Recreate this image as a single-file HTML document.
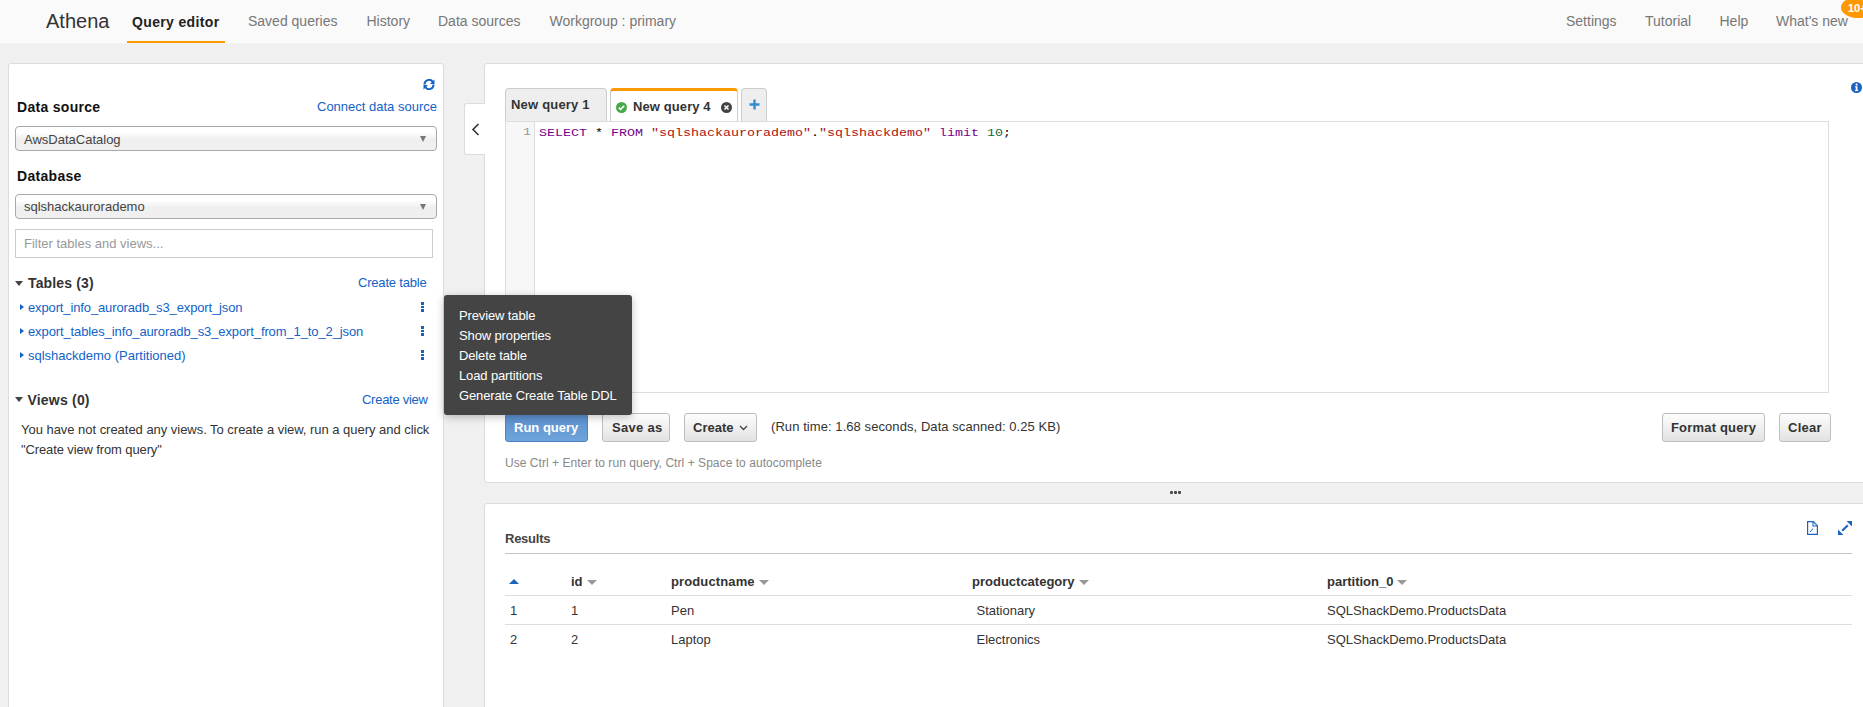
<!DOCTYPE html>
<html><head><meta charset="utf-8"><title>Athena</title>
<style>
*{box-sizing:border-box;margin:0;padding:0}
html,body{width:1863px;height:707px;overflow:hidden;background:#f0f0f0;font-family:"Liberation Sans",sans-serif;color:#333}
.t{position:absolute;white-space:nowrap;line-height:1}
.a{position:absolute}
.s14{font-size:14px}.s13{font-size:13px}.s12{font-size:12px}
.b{font-weight:bold}
.blue{color:#1262c8}
#hdr{position:absolute;left:0;top:0;width:1863px;height:43px;background:#fafafa}
.nav{color:#777}
.panel{position:absolute;background:#fff;border:1px solid #dcdcdc;border-radius:3px}
.sel{position:absolute;border:1px solid #a8a8a8;border-radius:4px;background:linear-gradient(#fff 0%,#fff 22%,#efefef 55%,#f0f0f0 100%)}
.btn{position:absolute;border:1px solid #bdbdbd;border-radius:3px;background:linear-gradient(#fdfdfd,#e2e2e2)}
.tri-d{position:absolute;width:0;height:0;border-left:4px solid transparent;border-right:4px solid transparent;border-top:5px solid #444}
.tri-r{position:absolute;width:0;height:0;border-top:3.5px solid transparent;border-bottom:3.5px solid transparent;border-left:4.5px solid #1262c8}
.keb{position:absolute;width:3px;height:10px}
.keb i{position:absolute;left:0;width:3px;height:2.8px;background:#1262c4}
.menu{position:absolute;left:444px;top:295px;width:188px;height:120px;background:#444;border-radius:3px;box-shadow:0 2px 8px rgba(0,0,0,.25)}
.mi{color:#fff;letter-spacing:-0.13px}
.cm{font-family:"Liberation Mono",monospace;font-size:13.33px;transform:scaleY(0.84);transform-origin:0 11.3px}
.kw{color:#708}.str{color:#a11}.num{color:#164}
.tab{position:absolute;top:88px;height:33px;border:1px solid #ccc;border-bottom:none;border-radius:4px 4px 0 0;background:#eee}
.thtri{position:absolute;width:0;height:0;border-left:5px solid transparent;border-right:5px solid transparent;border-top:5px solid #999}
</style></head><body>

<!-- HEADER -->
<div id="hdr"></div>
<div class="t" style="left:46px;top:10.5px;font-size:20px;color:#333">Athena</div>
<div class="t s14 b" style="left:132px;top:14.5px;color:#222;letter-spacing:0.35px">Query editor</div>
<div class="a" style="left:127px;top:41px;width:98px;height:2px;background:#f90"></div>
<div class="t s14 nav" style="left:248px;top:14px">Saved queries</div>
<div class="t s14 nav" style="left:366.5px;top:14px">History</div>
<div class="t s14 nav" style="left:438px;top:14px">Data sources</div>
<div class="t s14 nav" style="left:549.5px;top:14px">Workgroup : primary</div>
<div class="t s14 nav" style="left:1566px;top:14px">Settings</div>
<div class="t s14 nav" style="left:1645px;top:14px">Tutorial</div>
<div class="t s14 nav" style="left:1719.5px;top:14px">Help</div>
<div class="t s14 nav" style="left:1776px;top:14px">What's new</div>
<div class="a" style="left:1841px;top:-3px;width:34px;height:21px;border-radius:50%;background:#f90"></div>
<div class="t b" style="left:1848px;top:3px;font-size:11px;color:#fff">10+</div>

<!-- LEFT PANEL -->
<div class="panel" style="left:8px;top:63px;width:436px;height:700px"></div>
<svg class="a" style="left:423px;top:79px" width="12" height="11" viewBox="0 0 12 11"><path d="M1.5 5.5 A4.5 4.5 0 0 1 9.8 3" fill="none" stroke="#1262c8" stroke-width="2"/><path d="M11.5 0.5 L11.5 5 L7 5 Z" fill="#1262c8"/><path d="M10.5 5.5 A4.5 4.5 0 0 1 2.2 8" fill="none" stroke="#1262c8" stroke-width="2"/><path d="M0.5 10.5 L0.5 6 L5 6 Z" fill="#1262c8"/></svg>
<div class="t s14 b" style="left:17px;top:100px;color:#111;letter-spacing:0.3px">Data source</div>
<div class="t s13 blue" style="left:317px;top:100px">Connect data source</div>
<div class="sel" style="left:15px;top:126px;width:422px;height:25px"></div>
<div class="t s13" style="left:24px;top:132.5px;color:#444">AwsDataCatalog</div>
<div class="a" style="left:420px;top:136px;width:0;height:0;border-left:3.5px solid transparent;border-right:3.5px solid transparent;border-top:6px solid #777"></div>
<div class="t s14 b" style="left:17px;top:168.5px;color:#111;letter-spacing:0.3px">Database</div>
<div class="sel" style="left:15px;top:194px;width:422px;height:25px"></div>
<div class="t s13" style="left:24px;top:200px;color:#444">sqlshackaurorademo</div>
<div class="a" style="left:420px;top:204px;width:0;height:0;border-left:3.5px solid transparent;border-right:3.5px solid transparent;border-top:6px solid #777"></div>
<div class="a" style="left:15px;top:229px;width:418px;height:29px;border:1px solid #ccc;background:#fff"></div>
<div class="t s13" style="left:24px;top:236.5px;color:#999">Filter tables and views...</div>

<div class="tri-d" style="left:15px;top:281px"></div>
<div class="t s14 b" style="left:28px;top:276px;color:#333;letter-spacing:0.15px">Tables (3)</div>
<div class="t s13 blue" style="left:358px;top:276px;letter-spacing:-0.2px">Create table</div>
<div class="tri-r" style="left:19.5px;top:304px"></div>
<div class="t s13 blue" style="left:28px;top:301px;letter-spacing:-0.13px">export_info_auroradb_s3_export_json</div>
<div class="tri-r" style="left:19.5px;top:328px"></div>
<div class="t s13 blue" style="left:28px;top:325px;letter-spacing:-0.11px">export_tables_info_auroradb_s3_export_from_1_to_2_json</div>
<div class="tri-r" style="left:19.5px;top:352px"></div>
<div class="t s13 blue" style="left:28px;top:349px">sqlshackdemo (Partitioned)</div>
<div class="keb" style="left:421px;top:302px"><i style="top:0"></i><i style="top:3.6px"></i><i style="top:7.2px"></i></div>
<div class="keb" style="left:421px;top:326px"><i style="top:0"></i><i style="top:3.6px"></i><i style="top:7.2px"></i></div>
<div class="keb" style="left:421px;top:350px"><i style="top:0"></i><i style="top:3.6px"></i><i style="top:7.2px"></i></div>

<div class="tri-d" style="left:15px;top:397px"></div>
<div class="t s14 b" style="left:27.5px;top:392.5px;color:#333;letter-spacing:0.2px">Views (0)</div>
<div class="t s13 blue" style="left:362px;top:393px;letter-spacing:-0.27px">Create view</div>
<div class="t s13" style="left:21px;top:422.5px;color:#333;letter-spacing:-0.03px">You have not created any views. To create a view, run a query and click</div>
<div class="t s13" style="left:21px;top:442.5px;color:#333;letter-spacing:-0.12px">"Create view from query"</div>

<!-- RIGHT TOP PANEL -->
<div class="panel" style="left:484px;top:63px;width:1400px;height:420px"></div>
<div class="a" style="left:464px;top:103px;width:21px;height:52px;background:#fff;border:1px solid #dcdcdc;border-right:none;border-radius:3px 0 0 3px"></div>
<svg class="a" style="left:471px;top:123px" width="9" height="13" viewBox="0 0 9 13"><path d="M7.5 1 L2 6.5 L7.5 12" fill="none" stroke="#333" stroke-width="1.6"/></svg>
<svg class="a" style="left:1851px;top:82px" width="11" height="11" viewBox="0 0 11 11"><circle cx="5.5" cy="5.5" r="5.5" fill="#1a64c0"/><circle cx="5.6" cy="2.6" r="1.1" fill="#fff"/><path d="M3.9 4.3 H6.5 V8 H7.2 V9 H3.9 V8 H4.7 V5.2 H3.9 Z" fill="#fff"/></svg>

<div class="tab" style="left:505px;width:102px"></div>
<div class="t s13 b" style="left:511px;top:98px;color:#333;letter-spacing:0.2px">New query 1</div>
<div class="tab" style="left:610px;width:128px;background:#fff;border-top:3px solid #f90"></div>
<svg class="a" style="left:616px;top:102px" width="11" height="11" viewBox="0 0 11 11"><circle cx="5.5" cy="5.5" r="5.5" fill="#48a848"/><path d="M2.8 5.6 L4.7 7.4 L8.2 3.8" fill="none" stroke="#fff" stroke-width="1.6"/></svg>
<div class="t s13 b" style="left:633px;top:100px;color:#333;letter-spacing:0.1px">New query 4</div>
<svg class="a" style="left:721px;top:102px" width="11" height="11" viewBox="0 0 11 11"><circle cx="5.5" cy="5.5" r="5.5" fill="#444"/><path d="M3.5 3.5 L7.5 7.5 M7.5 3.5 L3.5 7.5" stroke="#fff" stroke-width="1.6"/></svg>
<div class="tab" style="left:741px;width:26px"></div>
<svg class="a" style="left:749px;top:99px" width="11" height="11" viewBox="0 0 11 11"><path d="M5.5 0.5 V10.5 M0.5 5.5 H10.5" stroke="#2f8fd2" stroke-width="2.4"/></svg>

<div class="a" style="left:505px;top:121px;width:1324px;height:272px;border:1px solid #ddd;background:#fff"></div>
<div class="a" style="left:506px;top:122px;width:29px;height:270px;background:#f7f7f7;border-right:1px solid #ddd"></div>
<div class="t cm" style="left:523px;top:125px;color:#999">1</div>
<div class="t cm" style="left:539px;top:125.5px;color:#000"><span class="kw">SELECT</span> * <span class="kw">FROM</span> <span class="str">"sqlshackaurorademo"</span>.<span class="str">"sqlshackdemo"</span> <span class="kw">limit</span> <span class="num">10</span>;</div>

<div class="btn" style="left:505px;top:413px;width:83px;height:29px;background:linear-gradient(#5b8fcf,#6ea4da);border-color:#4d84c4"></div>
<div class="t s13 b" style="left:514px;top:421px;color:#fff">Run query</div>
<div class="btn" style="left:602px;top:413px;width:68px;height:29px"></div>
<div class="t s13 b" style="left:612px;top:421px;color:#333;letter-spacing:0.3px">Save as</div>
<div class="btn" style="left:684px;top:413px;width:73px;height:29px"></div>
<div class="t s13 b" style="left:693px;top:421px;color:#333">Create</div>
<svg class="a" style="left:739px;top:425px" width="9" height="6" viewBox="0 0 9 6"><path d="M1 1 L4.5 4.5 L8 1" fill="none" stroke="#444" stroke-width="1.3"/></svg>
<div class="t s13" style="left:771px;top:420px;color:#333;letter-spacing:0.07px">(Run time: 1.68 seconds, Data scanned: 0.25 KB)</div>
<div class="btn" style="left:1662px;top:413px;width:103px;height:29px"></div>
<div class="t s13 b" style="left:1671px;top:421px;color:#333;letter-spacing:0.18px">Format query</div>
<div class="btn" style="left:1779px;top:413px;width:52px;height:29px"></div>
<div class="t s13 b" style="left:1788px;top:421px;color:#333;letter-spacing:0.25px">Clear</div>
<div class="t s12" style="left:505px;top:456.5px;color:#888;letter-spacing:0.05px">Use Ctrl + Enter to run query, Ctrl + Space to autocomplete</div>

<!-- resize handle -->
<div class="a" style="left:1170px;top:491px;width:3px;height:3px;background:#4a4a4a;border-radius:1px"></div>
<div class="a" style="left:1174px;top:491px;width:3px;height:3px;background:#4a4a4a;border-radius:1px"></div>
<div class="a" style="left:1178px;top:491px;width:3px;height:3px;background:#4a4a4a;border-radius:1px"></div>

<!-- RESULTS PANEL -->
<div class="panel" style="left:484px;top:503px;width:1400px;height:300px"></div>
<div class="t s13 b" style="left:505px;top:531.5px;color:#444;letter-spacing:-0.25px">Results</div>
<div class="a" style="left:505px;top:553px;width:1347px;height:1px;background:#c4c4c4"></div>
<svg class="a" style="left:1807px;top:521px" width="11" height="14" viewBox="0 0 11 14"><path d="M0.6 0.6 H6.3 L10.4 4.7 V13.4 H0.6 Z" fill="none" stroke="#1a64c0" stroke-width="1.2"/><path d="M6 0.6 V5 H10.4" fill="none" stroke="#1a64c0" stroke-width="1.1"/><path d="M3 10.8 Q5.2 9.8 5.6 7.6" fill="none" stroke="#1a64c0" stroke-width="1"/></svg>
<svg class="a" style="left:1838px;top:521px" width="14" height="14" viewBox="0 0 14 14"><path d="M4.2 9.8 L9.8 4.2" stroke="#1a64c0" stroke-width="2.1"/><path d="M8.6 0 H14 V5.4 Z" fill="#1a64c0"/><path d="M0 8.6 V14 H5.4 Z" fill="#1a64c0"/></svg>

<div class="a" style="left:509px;top:579px;width:0;height:0;border-left:5px solid transparent;border-right:5px solid transparent;border-bottom:5px solid #1a64c0"></div>
<div class="t s13 b" style="left:571px;top:574.5px;color:#333">id</div>
<div class="thtri" style="left:587px;top:580px"></div>
<div class="t s13 b" style="left:671px;top:574.5px;color:#333;letter-spacing:0.12px">productname</div>
<div class="thtri" style="left:759px;top:580px"></div>
<div class="t s13 b" style="left:972px;top:574.5px;color:#333">productcategory</div>
<div class="thtri" style="left:1079px;top:580px"></div>
<div class="t s13 b" style="left:1327px;top:574.5px;color:#333">partition_0</div>
<div class="thtri" style="left:1397px;top:580px"></div>
<div class="a" style="left:505px;top:595px;width:1347px;height:1px;background:#ddd"></div>
<div class="t s13" style="left:510px;top:604px;color:#333">1</div>
<div class="t s13" style="left:571px;top:604px;color:#333">1</div>
<div class="t s13" style="left:671px;top:604px;color:#333">Pen</div>
<div class="t s13" style="left:976.5px;top:604px;color:#333">Stationary</div>
<div class="t s13" style="left:1327px;top:604px;color:#333">SQLShackDemo.ProductsData</div>
<div class="a" style="left:505px;top:624px;width:1347px;height:1px;background:#ddd"></div>
<div class="t s13" style="left:510px;top:633px;color:#333">2</div>
<div class="t s13" style="left:571px;top:633px;color:#333">2</div>
<div class="t s13" style="left:671px;top:633px;color:#333">Laptop</div>
<div class="t s13" style="left:976.5px;top:633px;color:#333">Electronics</div>
<div class="t s13" style="left:1327px;top:633px;color:#333">SQLShackDemo.ProductsData</div>

<!-- CONTEXT MENU -->
<div class="menu"></div>
<div class="t s13 mi" style="left:459px;top:309px">Preview table</div>
<div class="t s13 mi" style="left:459px;top:329px">Show properties</div>
<div class="t s13 mi" style="left:459px;top:349px">Delete table</div>
<div class="t s13 mi" style="left:459px;top:369px">Load partitions</div>
<div class="t s13 mi" style="left:459px;top:389px">Generate Create Table DDL</div>

</body></html>
